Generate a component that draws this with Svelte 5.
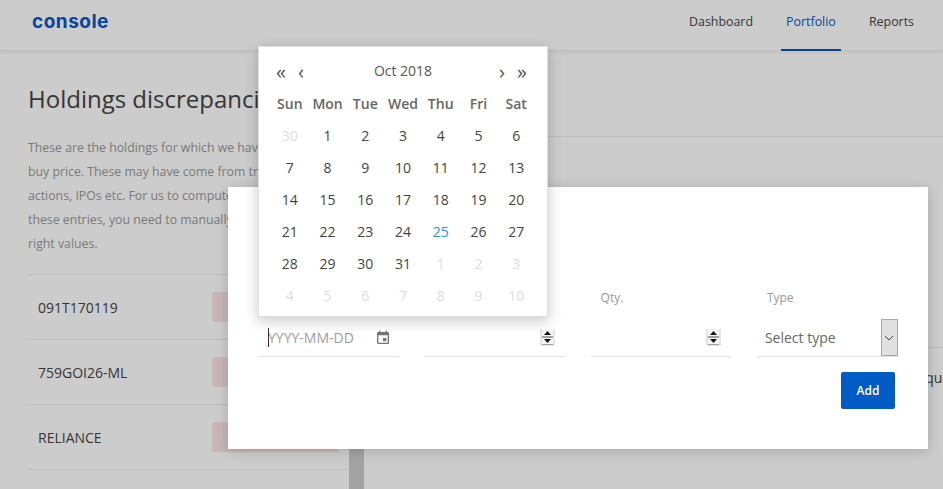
<script>
  const nav = ['Dashboard', 'Portfolio', 'Reports'];
  const rows = ['091T170119', '759GOI26-ML', 'RELIANCE'];
  const days = ['Sun', 'Mon', 'Tue', 'Wed', 'Thu', 'Fri', 'Sat'];
  const cells = [
    [30, 'off'], [1], [2], [3], [4], [5], [6],
    [7], [8], [9], [10], [11], [12], [13],
    [14], [15], [16], [17], [18], [19], [20],
    [21], [22], [23], [24], [25, 'today'], [26], [27],
    [28], [29], [30], [31], [1, 'off'], [2, 'off'], [3, 'off'],
    [4, 'off'], [5, 'off'], [6, 'off'], [7, 'off'], [8, 'off'], [9, 'off'], [10, 'off']
  ];
</script>

{#snippet spinner()}
  <svg class="spin" width="15" height="17" viewBox="0 0 15 17" aria-hidden="true">
    <rect width="15" height="17" fill="#e6e6e6" />
    <rect x="2" y="0" width="11" height="7" fill="#f6f6f6" />
    <rect x="2" y="9" width="11" height="6" fill="#f6f6f6" />
    <path d="M2 7.5H13M2 8.5H13M2 15.5H13" stroke="#a0a0a0" stroke-width="1" fill="none" />
    <path d="M7.5 2L11 6H4Z" fill="#111" />
    <path d="M7.5 14L4 10H11Z" fill="#111" />
  </svg>
{/snippet}

<div class="page">
  <header class="top">
    <div class="logo">console</div>
    <nav class="nav">
      {#each nav as item}
        <span class="nav-item" class:active={item === 'Portfolio'}>{item}</span>
      {/each}
    </nav>
  </header>

  <main class="main">
    <section class="left">
      <h1>Holdings discrepancies</h1>
      <p>These are the holdings for which we have no<br />buy price. These may have come from transfers,<br />actions, IPOs etc. For us to compute P&amp;L for<br />these entries, you need to manually enter the<br />right values.</p>
      <ul class="list">
        {#each rows as row}
          <li><span>{row}</span><i class="badge"></i></li>
        {/each}
      </ul>
    </section>
    <section class="right">
      <div class="rule one"></div>
      <div class="rule two"></div>
      <div class="hint">Holding quantity</div>
    </section>
  </main>

  <div class="overlay">
    <div class="modal">
      <div class="fields">
        <div class="field date">
          <div class="label">&nbsp;</div>
          <div class="control">
            <i class="caret"></i>
            <span class="ph">YYYY-MM-DD</span>
            <svg class="cal-icon" width="16" height="16" viewBox="0 0 24 24" aria-hidden="true">
              <path fill="#757575" d="M17 12h-5v5h5v-5zM16 1v2H8V1H6v2H5c-1.11 0-1.99.9-1.99 2L3 19a2 2 0 0 0 2 2h14c1.1 0 2-.9 2-2V5c0-1.1-.9-2-2-2h-1V1h-2zm3 18H5V8h14v11z" />
            </svg>
          </div>

          <div class="popup">
            <div class="cal-head">
              <span class="arrow a1">«</span>
              <span class="arrow a2">‹</span>
              <span class="month">Oct 2018</span>
              <span class="arrow a3">›</span>
              <span class="arrow a4">»</span>
            </div>
            <div class="cal-grid heads">
              {#each days as d}<span>{d}</span>{/each}
            </div>
            <div class="cal-grid">
              {#each cells as c}
                <span class="cell {c[1] ?? ''}">{c[0]}</span>
              {/each}
            </div>
          </div>
        </div>

        <div class="field">
          <div class="label">Price</div>
          <div class="control end">{@render spinner()}</div>
        </div>
        <div class="field">
          <div class="label">Qty.</div>
          <div class="control end">{@render spinner()}</div>
        </div>
        <div class="field">
          <div class="label">Type</div>
          <div class="control select">
            <span class="sel-text">Select type</span>
            <span class="sel-btn">
              <svg width="10" height="6" viewBox="0 0 10 6" aria-hidden="true">
                <path d="M1 1L5 5L9 1" fill="none" stroke="#444" stroke-width="1" />
              </svg>
            </span>
          </div>
        </div>
      </div>
      <div class="actions"><button class="add">Add</button></div>
    </div>
  </div>
</div>

<style>
  :global(body) {
    margin: 0;
    font-family: "Open Sans", "Noto Sans", sans-serif;
    background: #fff;
  }
  .page {
    position: relative;
    width: 943px;
    height: 489px;
    overflow: hidden;
    background: #fff;
    color: #444;
  }
  .top {
    height: 51px;
    box-sizing: border-box;
    display: flex;
    align-items: center;
    justify-content: space-between;
    padding: 0 29px 0 32px;
    border-bottom: 1px solid #eee;
    box-shadow: 0 1px 4px rgba(0, 0, 0, 0.08);
  }
  .logo {
    font-family: "Inter", sans-serif;
    font-weight: 700;
    font-size: 19px;
    letter-spacing: 0.5px;
    color: #0a57c0;
    margin-top: -7px;
  }
  .nav {
    display: flex;
    align-self: stretch;
  }
  .nav-item {
    display: flex;
    align-items: center;
    justify-content: center;
    box-sizing: border-box;
    height: 51px;
    padding: 0 0 9px;
    font-size: 12.4px;
    color: #444;
  }
  .nav-item.active {
    width: 60px;
    margin: 0 28px;
    padding-bottom: 7px;
    color: #0b57c0;
    border-bottom: 2px solid #0054c0;
  }
  .main {
    display: flex;
    height: 438px;
  }
  .left {
    width: 321px;
    margin-left: 28px;
    flex: none;
  }
  h1 {
    margin: 31px 0 0;
    font-size: 24px;
    line-height: 33px;
    font-weight: 400;
    color: #444;
    white-space: nowrap;
  }
  p {
    margin: 21px 0 0;
    font-size: 12.3px;
    line-height: 24px;
    color: #999;
    width: 320px;
    height: 120px;
    overflow: hidden;
    white-space: nowrap;
  }
  .list {
    list-style: none;
    margin: 18px 0 0;
    padding: 0;
    border-top: 1px solid #eee;
  }
  .list li {
    display: flex;
    align-items: center;
    justify-content: space-between;
    box-sizing: border-box;
    height: 65px;
    padding: 0 10px 0 10px;
    border-bottom: 1px solid #eee;
    font-size: 14px;
    color: #444;
  }
  .badge {
    display: block;
    width: 127px;
    height: 30px;
    border-radius: 2px;
    background: #fbe4e6;
  }
  .right {
    flex: 1;
    border-left: 15px solid #ccc;
    min-width: 0;
    position: relative;
  }
  .rule {
    height: 1px;
    background: #eee;
  }
  .rule.one { margin-top: 85px; }
  .rule.two { margin-top: 210px; }
  .hint {
    margin: 20px 0 0 507px;
    font-size: 14px;
    white-space: nowrap;
    color: #444;
  }
  .overlay {
    position: absolute;
    inset: 0;
    background: rgba(0, 0, 0, 0.2);
    display: flex;
    padding: 187px 15px 0 228px;
    box-sizing: border-box;
  }
  .modal {
    width: 700px;
    height: 262px;
    box-sizing: border-box;
    background: #fff;
    padding: 103px 30px 0;
    box-shadow: 0 2px 12px rgba(0, 0, 0, 0.18);
  }
  .fields {
    display: grid;
    grid-template-columns: repeat(3, 140.5px) 141px;
    column-gap: 25.8px;
  }
  .field {
    position: relative;
  }
  .label {
    font-size: 12px;
    line-height: 16px;
    color: #999;
    padding-left: 10px;
  }
  .control {
    height: 38px;
    margin-top: 13px;
    box-sizing: border-box;
    border-bottom: 1px solid #e0e0e0;
    display: flex;
    align-items: center;
    position: relative;
  }
  .control.end {
    justify-content: flex-end;
    padding-right: 10px;
  }
  .spin {
    display: block;
    margin-top: -1px;
  }
  .caret {
    position: absolute;
    left: 10px;
    top: 9px;
    width: 1px;
    height: 19px;
    background: #333;
  }
  .ph {
    font-size: 14px;
    color: #9e9e9e;
    padding-left: 10px;
    margin-top: -1px;
  }
  .cal-icon {
    position: absolute;
    left: 117px;
    top: 11px;
  }
  .select .sel-text {
    flex: 1;
    font-size: 14px;
    color: #666;
    padding-left: 8px;
  }
  .sel-btn {
    width: 17px;
    height: 37px;
    box-sizing: border-box;
    background: #e0e0e0;
    border: 1px solid #aaa;
    display: flex;
    align-items: center;
    justify-content: center;
  }
  .actions {
    display: flex;
    justify-content: flex-end;
    margin-top: 15px;
    padding-right: 3px;
  }
  .add {
    width: 54px;
    height: 37px;
    border: 0;
    border-radius: 2px;
    background: #005bc4;
    color: #fff;
    font-family: inherit;
    font-size: 12px;
    font-weight: 600;
    padding: 0;
  }
  .popup {
    position: absolute;
    left: 0;
    top: -244px;
    width: 290px;
    height: 271px;
    box-sizing: border-box;
    background: #fff;
    border: 1px solid #e0e0e0;
    padding: 0 12px;
    box-shadow: 0 4px 14px rgba(0, 0, 0, 0.22);
    z-index: 2;
  }
  .cal-head {
    position: relative;
    height: 46px;
    font-size: 14px;
    color: #555;
  }
  .month {
    display: block;
    text-align: center;
    line-height: 48px;
  }
  .arrow {
    position: absolute;
    top: 0;
    font-size: 20px;
    line-height: 50px;
    color: #555;
  }
  .a1 { left: 5px; }
  .a2 { left: 27px; }
  .a3 { right: 30px; }
  .a4 { right: 8px; }
  .cal-grid {
    display: grid;
    grid-template-columns: repeat(7, 1fr);
    width: 264px;
    text-align: center;
    font-size: 14px;
  }
  .cal-grid.heads {
    font-weight: 600;
    color: #666;
    height: 27px;
    line-height: 22px;
  }
  .cell {
    height: 32px;
    line-height: 32px;
    color: #444;
  }
  .cell.off { color: #ddd; }
  .cell.today { color: #2d8fdd; }
</style>
